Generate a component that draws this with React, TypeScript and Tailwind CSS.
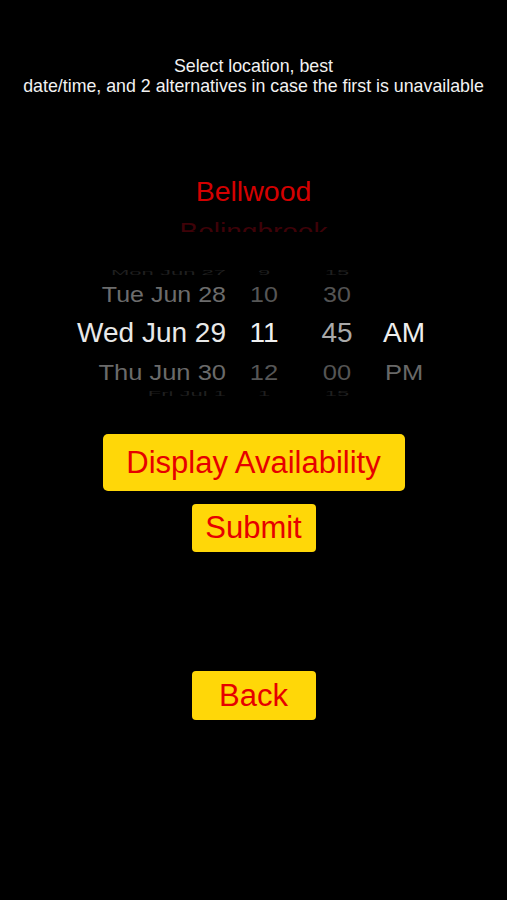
import React from "react";

const font = { fontFamily: '"Liberation Sans", Arial, sans-serif' };

type Cell = { t: string; c: string };

function Column({
  cells,
  width,
  align,
}: {
  cells: Cell[];
  width: string;
  align: "right" | "center";
}) {
  const a = align === "right" ? "justify-end" : "justify-center";
  return (
    <div className={`flex flex-col ${width}`}>
      <div className={`flex h-[13px] shrink-0 items-end overflow-hidden ${a}`}>
        <span className="block origin-bottom scale-y-[0.35] text-[22px] leading-[22px]" style={{ color: cells[0].c }}>
          {cells[0].t}
        </span>
      </div>
      <div className={`flex h-[36px] shrink-0 items-center ${a}`}>
        <span className="block scale-y-[0.88] text-[25px] leading-[30px]" style={{ color: cells[1].c }}>
          {cells[1].t}
        </span>
      </div>
      <div className={`flex h-[42px] shrink-0 items-center ${a}`}>
        <span className="block text-[28px] leading-[34px]" style={{ color: cells[2].c }}>
          {cells[2].t}
        </span>
      </div>
      <div className={`flex h-[36px] shrink-0 items-center ${a}`}>
        <span className="block scale-y-[0.88] text-[25.5px] leading-[30px]" style={{ color: cells[3].c }}>
          {cells[3].t}
        </span>
      </div>
      <div className={`flex h-[12px] shrink-0 items-start overflow-hidden ${a}`}>
        <span className="block origin-top scale-y-[0.35] text-[22px] leading-[22px]" style={{ color: cells[4].c }}>
          {cells[4].t}
        </span>
      </div>
    </div>
  );
}

export default function App() {
  const faint = "#1f1f1f";
  return (
    <div className="min-h-[900px] w-full bg-black" style={font}>
      <div className="flex flex-col items-center pt-[56px] text-center text-[17.8px] leading-[20px] text-[#f2f2f2]">
        <div>Select location, best</div>
        <div>date/time, and 2 alternatives in case the first is unavailable</div>
      </div>

      {/* location picker */}
      <div className="mt-[73px] flex h-[63px] flex-col items-center overflow-hidden">
        <div className="flex h-[44px] shrink-0 items-center">
          <span className="text-[28.5px] leading-[34px] text-[#d40000]">Bellwood</span>
        </div>
        <div className="flex h-[38px] shrink-0 items-center">
          <span className="block scale-y-[0.85] text-[28px] leading-[34px] text-[#3e0208]">Bolingbrook</span>
        </div>
      </div>

      {/* date/time picker */}
      <div className="mt-[31px] flex h-[139px] overflow-hidden pl-[60px]">
        <Column
          width="w-[166px]"
          align="right"
          cells={[
            { t: "Mon Jun 27", c: faint },
            { t: "Tue Jun 28", c: "#6c6c6c" },
            { t: "Wed Jun 29", c: "#e8e8e8" },
            { t: "Thu Jun 30", c: "#6a6a6a" },
            { t: "Fri Jul 1", c: faint },
          ]}
        />
        <div className="w-[13px]" />
        <Column
          width="w-[50px]"
          align="center"
          cells={[
            { t: "9", c: faint },
            { t: "10", c: "#565656" },
            { t: "11", c: "#f0f0f0" },
            { t: "12", c: "#565656" },
            { t: "1", c: faint },
          ]}
        />
        <div className="w-[23px]" />
        <Column
          width="w-[50px]"
          align="center"
          cells={[
            { t: "15", c: faint },
            { t: "30", c: "#545454" },
            { t: "45", c: "#a9a9a9" },
            { t: "00", c: "#545454" },
            { t: "15", c: faint },
          ]}
        />
        <div className="w-[12px]" />
        <Column
          width="w-[60px]"
          align="center"
          cells={[
            { t: "", c: faint },
            { t: "", c: "#666" },
            { t: "AM", c: "#eeeeee" },
            { t: "PM", c: "#686868" },
            { t: "", c: faint },
          ]}
        />
      </div>

      {/* buttons */}
      <div className="mt-[32px] flex flex-col items-center">
        <button className="flex h-[57px] w-[302px] items-center justify-center rounded-[5px] bg-[#ffd708] text-[31px] leading-[36px] text-[#e60000]">
          Display Availability
        </button>
        <button className="mt-[13px] flex h-[48px] w-[124px] items-center justify-center rounded-[4px] bg-[#ffd708] text-[31px] leading-[36px] text-[#e60000]">
          Submit
        </button>
        <button className="mt-[119px] flex h-[49px] w-[124px] items-center justify-center rounded-[4px] bg-[#ffd708] text-[31px] leading-[36px] text-[#e60000]">
          Back
        </button>
      </div>
    </div>
  );
}
